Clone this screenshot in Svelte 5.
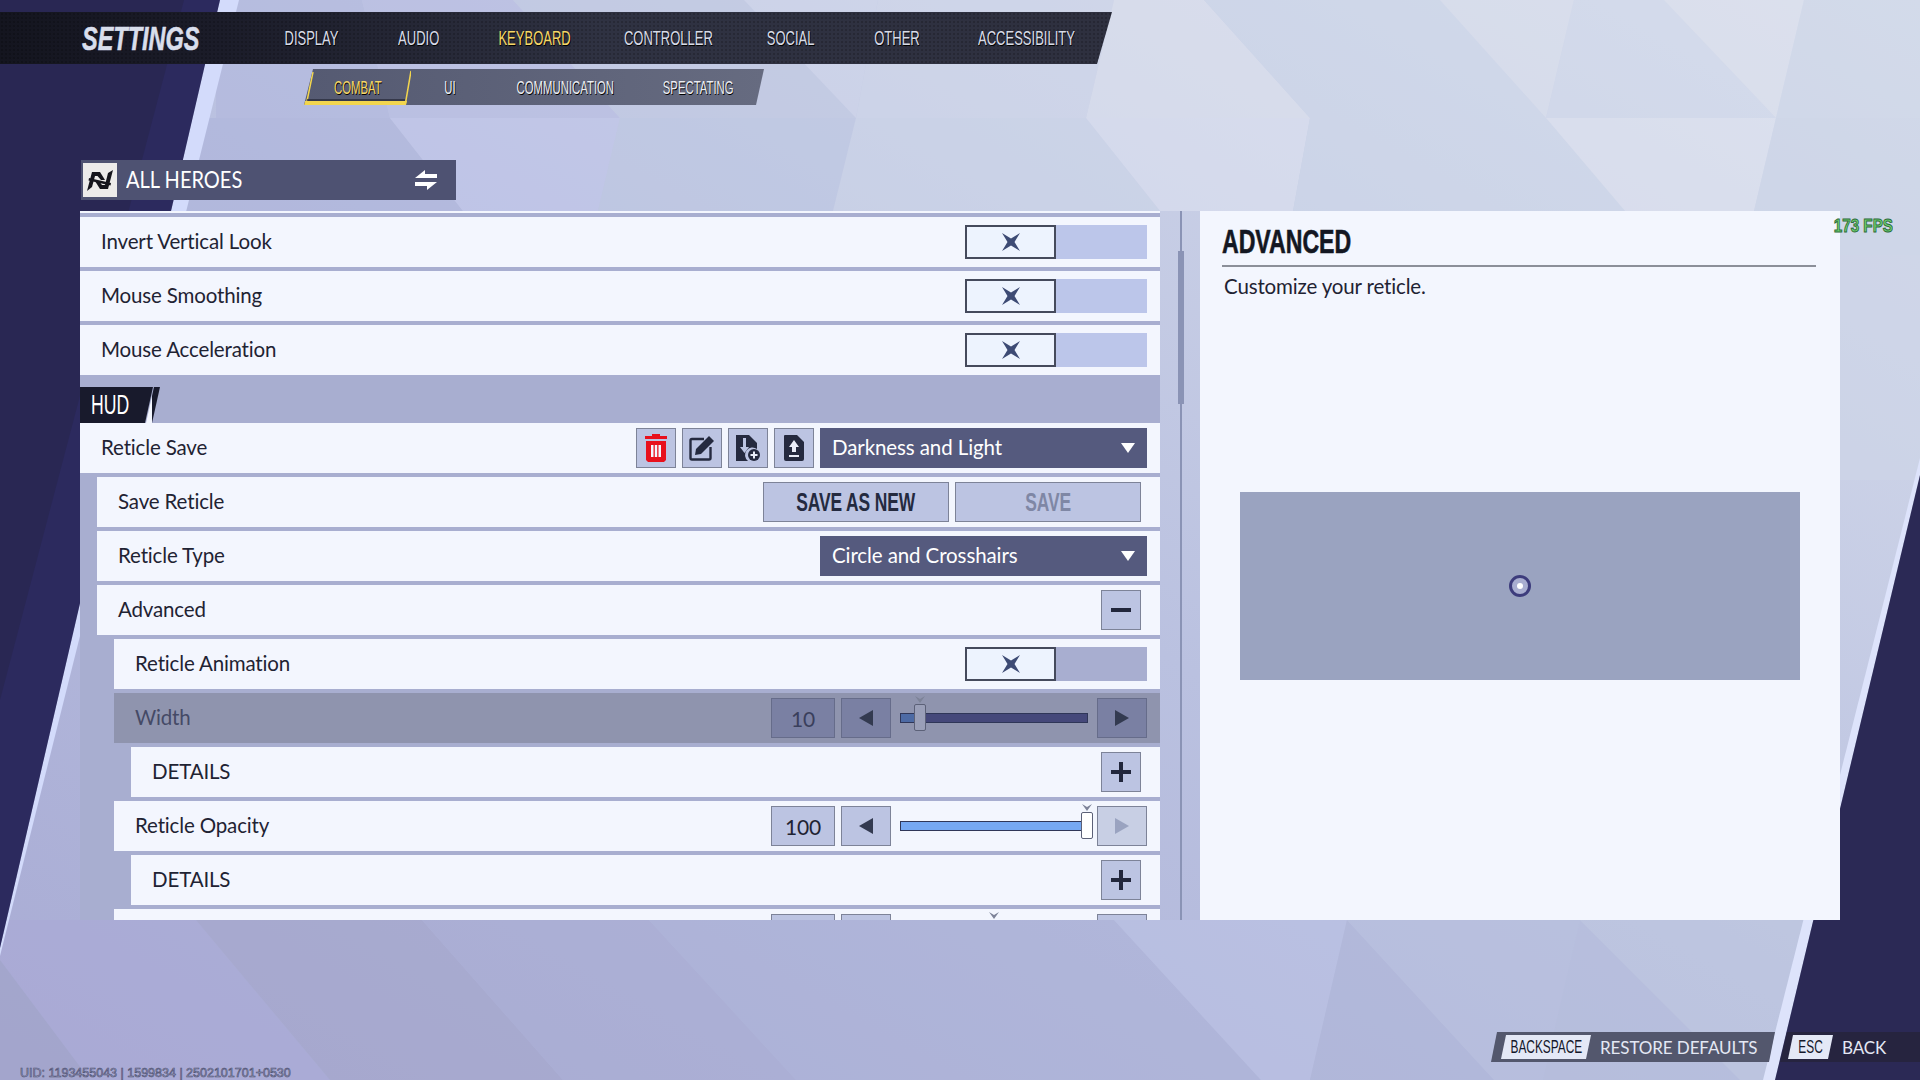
<script>
  const tabs = [
    ["DISPLAY", 116],
    ["AUDIO", 100],
    ["KEYBOARD", 132],
    ["CONTROLLER", 135],
    ["SOCIAL", 110],
    ["OTHER", 101],
    ["ACCESSIBILITY", 159]
  ];
  const subTabs = [
    ["COMBAT", 107],
    ["UI", 78],
    ["COMMUNICATION", 153],
    ["SPECTATING", 113]
  ];
  const toggles = ["Invert Vertical Look", "Mouse Smoothing", "Mouse Acceleration"];

  // background facets, in page pixels
  const facets = [
    ["216,0 362,0 390,118 216,118", "#b1b7de"],
    ["362,0 513,0 620,118 390,118", "#b9bde3"],
    ["513,0 744,0 856,118 620,118", "#c3cbe3"],
    ["744,0 878,0 856,118", "#d3d9ed"],
    ["878,0 1114,0 1086,118 856,118", "#d3daec"],
    ["1114,0 1204,0 1310,118 1086,118", "#e1e5f0"],
    ["1204,0 1440,0 1546,118 1310,118", "#cfd9ea"],
    ["1440,0 1574,0 1546,118", "#dde2ee"],
    ["1574,0 1664,0 1776,118 1546,118", "#d3dbec"],
    ["1664,0 1804,0 1776,118", "#e0e4ef"],
    ["1804,0 1920,0 1920,118 1776,118", "#cfd8e9"],
    ["180,118 390,118 463,211 170,211", "#adb3db"],
    ["390,118 620,118 598,211 463,211", "#c3c7ec"],
    ["620,118 856,118 833,211 598,211", "#bfc9e3"],
    ["856,118 1086,118 1160,211 833,211", "#cfd8ea"],
    ["1086,118 1310,118 1293,211 1160,211", "#e0e4f2"],
    ["1310,118 1546,118 1625,211 1293,211", "#cfd9ea"],
    ["1546,118 1776,118 1754,211 1625,211", "#e2e6f2"],
    ["1776,118 1920,118 1920,480 1840,480 1840,211 1754,211", "#cdd6e8"],
    ["0,920 196,920 330,1080 0,1080", "#aaa9d6"],
    ["0,960 90,1080 0,1080", "#9fa1c6"],
    ["196,920 422,920 563,1080 330,1080", "#a3a4c9"],
    ["422,920 649,920 796,1080 563,1080", "#a8abd2"],
    ["649,920 1114,920 1261,1080 796,1080", "#acb2d8"],
    ["1114,920 1347,920 1310,1080 1261,1080", "#bcc3e6"],
    ["1347,920 1494,1080 1310,1080", "#aeb5d8"],
    ["1347,920 1580,920 1543,1080 1494,1080", "#b8c0de"],
    ["1580,920 1740,1080 1543,1080", "#b6bedc"],
    ["1580,920 1812,920 1775,1080 1740,1080", "#c0c9e0"]
  ];
</script>

{#snippet toggle()}
  <div class="toggle">
    <div class="knob">
      <svg width="20" height="20" viewBox="-10 -10 20 20"><path d="M-9 -9L0 -3.500L9 -9L3.500 0L9 9L0 3.500L-9 9L-3.500 0Z" fill="#3d4a74" /></svg>
    </div>
  </div>
{/snippet}

{#snippet select(text)}
  <div class="select">
    <span>{text}</span>
    <svg width="14" height="10" viewBox="0 0 14 10"><path d="M0 0H14L7 10Z" fill="#fff" /></svg>
  </div>
{/snippet}

{#snippet plus()}
  <div class="sq">
    <svg width="20" height="20" viewBox="0 0 20 20"><path d="M8 0H12V8H20V12H12V20H8V12H0V8H8Z" fill="#22273c" /></svg>
  </div>
{/snippet}

{#snippet stepper(value, pct, full)}
  <div class="stepper">
    <div class="value">{value}</div>
    <div class="arrow"><svg width="14" height="16" viewBox="0 0 14 16"><path d="M14 0V16L0 8Z" /></svg></div>
    <div class="slider">
      <div class="track">
        <div class="fill" style="width: {pct}%"></div>
      </div>
      <div class="thumb" style="left: {pct}%"></div>
      <svg class="caret" style="left: {pct}%" width="10" height="7" viewBox="0 0 10 7"><path d="M0 0L5 3L10 0L5 7Z" /></svg>
    </div>
    <div class="arrow" class:off={full}><svg width="14" height="16" viewBox="0 0 14 16"><path d="M0 0V16L14 8Z" /></svg></div>
  </div>
{/snippet}

<div class="page">
  <svg class="backdrop" width="1920" height="1080" viewBox="0 0 1920 1080">
    <defs>
      <linearGradient id="base" x1="0" y1="1" x2="1" y2="0">
        <stop offset="0" stop-color="#a8abd4" />
        <stop offset="0.5" stop-color="#bac1e0" />
        <stop offset="1" stop-color="#d8deec" />
      </linearGradient>
    </defs>
    <rect width="1920" height="1080" fill="url(#base)" />
    <g opacity="0.55">
      {#each facets as [points, fill]}
        <polygon {points} {fill} />
      {/each}
    </g>
    <polygon points="220,0 239,0 0,956 0,948" fill="#d3dbfb" />
    <polygon points="0,0 220,0 0,948" fill="#2c2a5e" />
    <polygon points="0,0 184,0 0,700" fill="#292753" />
    <polygon points="1920,458 1920,475 1775,1080 1763,1080" fill="#dde3fb" />
    <polygon points="1920,475 1920,1080 1775,1080" fill="#2b2955" />
  </svg>

  <nav class="topbar">
    <div class="brand"><span>SETTINGS</span></div>
    {#each tabs as [tab, w]}
      <div class="tab" class:on={tab === "KEYBOARD"} style="width: {w}px"><span>{tab}</span></div>
    {/each}
  </nav>

  <div class="subbar">
    {#each subTabs as [tab, w], i}
      <div class="sub" class:on={i === 0} style="width: {w}px">
        <span>{tab}</span>
        {#if i === 0}
          <svg class="mark" width="107" height="36" viewBox="0 0 107 36">
            <path d="M0 36H102L103 32H1Z" fill="#f2d54e" />
            <path d="M9 3L3 32M107 2L101.500 34" stroke="#f2d54e" stroke-width="1.500" fill="none" />
            <path d="M3 31H101" stroke="#2a2c3c" stroke-width="1.500" />
          </svg>
        {/if}
      </div>
    {/each}
  </div>

  <div class="hero">
    <div class="logo">
      <svg width="30" height="26" viewBox="0 0 30 26">
        <path d="M2 24L7 5H15L20 13L16 13L12.500 9H10L7 20Z" fill="#15151c" />
        <path d="M28 3L23 22H15L10 14H14L17 18H20L23 6Z" fill="#15151c" />
        <path d="M4 11L26 16L25.500 18.500L3.500 13.500Z" fill="#15151c" />
      </svg>
    </div>
    <span class="hero-name">ALL HEROES</span>
    <svg class="swap" width="24" height="20" viewBox="0 0 24 20">
      <path d="M11 0V4H23V8H1Z M13 20V16H1V12H23Z" fill="#fff" />
    </svg>
  </div>

  <main class="content">
    <section class="list">
      {#each toggles as label}
        <div class="row"><span class="name">{label}</span>{@render toggle()}</div>
      {/each}

      <div class="section">
        <div class="tag"><span>HUD</span></div>
        <div class="slash"></div>
      </div>

      <div class="row">
        <span class="name">Reticle Save</span>
        <div class="tools">
          <div class="tool">
            <svg width="24" height="28" viewBox="0 0 24 28">
              <path d="M8 0H16V2H23V5H1V2H8Z M2 7H22V26L20 28H4L2 26Z" fill="#e8101c" />
              <path d="M7 11H9.500V23H7Z M10.800 11H13.200V23H10.800Z M14.500 11H17V23H14.500Z" fill="#f3f6fe" />
            </svg>
          </div>
          <div class="tool">
            <svg width="26" height="26" viewBox="0 0 26 26">
              <path d="M15 4H3Q1.500 4 1.500 5.500V23Q1.500 24.500 3 24.500H20Q21.500 24.500 21.500 23V12" fill="none" stroke="#252a3f" stroke-width="2.400" />
              <path d="M20 1L25 6L12 19L6 20L7 14Z" fill="#252a3f" />
            </svg>
          </div>
          <div class="tool">
            <svg width="26" height="28" viewBox="0 0 26 28">
              <path d="M1 1H14L22 9V15A7 7 0 0 0 13 27H1Z" fill="#252a3f" />
              <path d="M8 4H11V13H14L9.500 19L5 13H8Z" fill="#bcc4e2" />
              <circle cx="19" cy="21" r="6" fill="#252a3f" />
              <path d="M18 17.500H20V20H22.500V22H20V24.500H18V22H15.500V20H18Z" fill="#e9edf8" />
            </svg>
          </div>
          <div class="tool">
            <svg width="22" height="28" viewBox="0 0 22 28">
              <path d="M2 1H14L21 8V25Q21 27 19 27H3Q1 27 1 25V2Q1 1 2 1Z" fill="#252a3f" />
              <path d="M11 6L16 13H13V18H9V13H6Z M6 21H16V23H6Z" fill="#e9edf8" />
            </svg>
          </div>
        </div>
        {@render select("Darkness and Light")}
      </div>

      <div class="row l1">
        <span class="name">Save Reticle</span>
        <div class="buttons">
          <div class="btn"><span>SAVE AS NEW</span></div>
          <div class="btn off"><span>SAVE</span></div>
        </div>
      </div>

      <div class="row l1"><span class="name">Reticle Type</span>{@render select("Circle and Crosshairs")}</div>

      <div class="row l1">
        <span class="name">Advanced</span>
        <div class="sq">
          <svg width="20" height="4" viewBox="0 0 20 4"><path d="M0 0H20V4H0Z" fill="#22273c" /></svg>
        </div>
      </div>

      <div class="row l2"><span class="name">Reticle Animation</span>{@render toggle()}</div>
      <div class="row l2 hot"><span class="name">Width</span>{@render stepper(10, 10.600, false)}</div>
      <div class="row l3"><span class="name">DETAILS</span>{@render plus()}</div>
      <div class="row l2"><span class="name">Reticle Opacity</span>{@render stepper(100, 99.700, true)}</div>
      <div class="row l3"><span class="name">DETAILS</span>{@render plus()}</div>
      <div class="row l2"><span class="name"></span>{@render stepper("", 50, false)}</div>
    </section>

    <div class="scroll"><div class="scroll-thumb"></div></div>

    <aside class="panel">
      <h2><span>ADVANCED</span></h2>
      <p>Customize your reticle.</p>
      <div class="preview">
        <svg width="30" height="30" viewBox="0 0 30 30">
          <circle cx="15" cy="15" r="9.500" fill="#a9aed0" stroke="#3d3c7c" stroke-width="3" />
          <circle cx="15" cy="15" r="3" fill="#fff" />
        </svg>
      </div>
      <div class="fps">173 FPS</div>
    </aside>
  </main>

  <footer class="foot">
    <div class="uid">UID: 1193455043 | 1599834 | 2502101701+0530</div>
    <div class="hints">
      <div class="hint restore"><div class="key wide"><span>BACKSPACE</span></div><span class="hint-text">RESTORE DEFAULTS</span></div>
      <div class="hint back"><div class="key"><span>ESC</span></div><span class="hint-text">BACK</span></div>
    </div>
  </footer>
</div>

<style>
  :global(body) {
    margin: 0;
  }

  .page {
    position: relative;
    width: 1920px;
    height: 1080px;
    overflow: hidden;
    padding-top: 12px;
    box-sizing: border-box;
    font-family: Lato, "Noto Sans", sans-serif;
    color: #1f2333;
  }

  .backdrop {
    position: absolute;
    inset: 0;
  }

  .topbar,
  .subbar,
  .hero,
  .content,
  .foot {
    position: relative;
  }

  /* the game's display face is very condensed, squeeze Liberation Sans to fit */
  .brand span,
  .tab span,
  .sub span,
  .tag span,
  .btn span,
  .panel h2 span,
  .key span {
    display: inline-block;
    flex: none;
    white-space: nowrap;
    font-family: "Liberation Sans", sans-serif;
  }

  /* header */
  .topbar {
    display: flex;
    align-items: center;
    width: 1112px;
    height: 52px;
    box-sizing: border-box;
    padding-left: 82px;
    background:
      radial-gradient(#0000002e 1px, transparent 1.500px) 0 0 / 4px 4px,
      linear-gradient(90deg, #14151f 0, #1b1c29 220px, #2f3242 600px, #2e303f 100%);
    clip-path: polygon(0 0, 100% 0, 1097px 100%, 0 100%);
  }

  .brand {
    width: 171px;
    flex: none;
  }

  .brand span {
    font-size: 34px;
    font-weight: 700;
    font-style: italic;
    color: #d9deec;
    -webkit-text-stroke: 0.6px #d9deec;
    transform: scaleX(0.69);
    transform-origin: left;
  }

  .tab,
  .sub {
    position: relative;
    display: flex;
    align-items: center;
    justify-content: center;
    flex: none;
    height: 100%;
  }

  .tab span {
    font-size: 20px;
    color: #d8dce8;
    text-shadow: 1px 1px 0 #000;
    transform: scaleX(0.65);
  }

  .tab.on span,
  .sub.on span {
    color: #f6d868;
  }

  .subbar {
    display: flex;
    width: 460px;
    height: 36px;
    margin: 5px 0 0 304px;
    background: linear-gradient(90deg, #555a72, #666b80);
    clip-path: polygon(9px 0, 100% 0, 452px 100%, 0 100%);
  }

  .sub span {
    padding-top: 2px;
    font-size: 18px;
    color: #eceef4;
    text-shadow: 1px 1px 0 #000;
    transform: scaleX(0.63);
  }

  .mark {
    position: absolute;
    inset: 0;
  }

  .hero {
    display: flex;
    align-items: center;
    width: 375px;
    height: 40px;
    margin: 55px 0 0 81px;
    background: #4e5272;
    color: #fff;
  }

  .logo {
    display: flex;
    align-items: center;
    justify-content: center;
    width: 34px;
    height: 34px;
    margin-left: 2px;
    background: #ecebea;
  }

  .hero-name {
    display: inline-block;
    margin: 0 -14px 2px 9px;
    font-size: 23px;
    transform: scaleX(0.87);
    transform-origin: left;
  }

  .swap {
    margin-left: auto;
    margin-right: 18px;
  }

  /* main columns */
  .content {
    display: flex;
    height: 709px;
    margin: 11px 0 0 80px;
  }

  .list {
    width: 1080px;
    box-sizing: border-box;
    overflow: hidden;
    padding-top: 4px;
    border-top: 2px solid #f3f6fe;
    background: #a8aed0;
  }

  .row {
    display: flex;
    align-items: center;
    justify-content: space-between;
    flex: none;
    height: 50px;
    margin-bottom: 4px;
    padding: 0 13px 0 21px;
    background: #f3f6fe;
    font-size: 20.500px;
    letter-spacing: -0.15px;
  }

  .name {
    padding-bottom: 2px;
  }

  .l1 {
    margin-left: 17px;
  }

  .l2 {
    margin-left: 34px;
  }

  .l3 {
    margin-left: 51px;
  }

  .hot {
    background: #8f94ae;
    color: #454a66;
  }

  .section {
    display: flex;
    align-items: flex-end;
    height: 48px;
    margin-top: -4px;
  }

  .tag {
    width: 73px;
    height: 36px;
    box-sizing: border-box;
    padding-left: 11px;
    background: #181a2c;
    clip-path: polygon(0 0, 100% 0, 65px 100%, 0 100%);
    line-height: 36px;
  }

  .tag span {
    font-size: 28px;
    color: #fff;
    transform: scaleX(0.63);
    transform-origin: left;
  }

  .slash {
    width: 14px;
    height: 36px;
    margin-left: -7px;
    background: linear-gradient(90deg, #f3f6fe 0 45%, #181a2c 45%);
    clip-path: polygon(8px 0, 100% 0, 6px 100%, 0 100%);
  }

  /* controls */
  .toggle {
    display: flex;
    width: 182px;
    height: 34px;
    background: #bcc6ea;
  }

  .l2 .toggle {
    background: #a8aed0;
  }

  .knob {
    display: flex;
    align-items: center;
    justify-content: center;
    width: 91px;
    height: 34px;
    box-sizing: border-box;
    border: 2px solid #454a5c;
    background: #edf3fe;
  }

  .select {
    display: flex;
    align-items: center;
    justify-content: space-between;
    width: 327px;
    height: 40px;
    box-sizing: border-box;
    padding: 0 12px;
    background: #555a7e;
    color: #fff;
    font-size: 20.500px;
    letter-spacing: -0.1px;
  }

  .select span {
    padding-bottom: 2px;
  }

  .tools {
    display: flex;
    gap: 6px;
    margin-left: auto;
    margin-right: 6px;
  }

  .tool,
  .sq,
  .value,
  .arrow {
    display: flex;
    align-items: center;
    justify-content: center;
    box-sizing: border-box;
    height: 40px;
    border: 1px solid #7d8398;
    background: #bcc4e2;
  }

  .tool {
    width: 40px;
  }

  .sq {
    width: 40px;
    margin-right: 6px;
  }

  .buttons {
    display: flex;
    gap: 6px;
    margin-right: 6px;
  }

  .btn {
    display: flex;
    align-items: center;
    justify-content: center;
    width: 186px;
    height: 40px;
    box-sizing: border-box;
    border: 1px solid #7d8398;
    background: #bcc4e2;
    color: #242a3f;
  }

  .btn span {
    font-size: 26px;
    font-weight: 700;
    transform: scaleX(0.67);
  }

  .btn.off {
    color: #7f87a5;
  }

  .stepper {
    display: flex;
    align-items: center;
  }

  .value {
    width: 64px;
    margin-right: 6px;
    font-size: 21px;
    color: #1f2333;
  }

  .arrow {
    width: 50px;
    fill: #333a50;
  }

  .arrow.off {
    background: #c8cfe4;
    fill: #9aa3c0;
  }

  .hot .value,
  .hot .arrow {
    border-color: #666c8a;
    background: #7a80a3;
  }

  .hot .value {
    color: #3a3f5c;
  }

  .slider {
    position: relative;
    width: 188px;
    margin: 0 9px;
  }

  .track {
    height: 10px;
    box-sizing: border-box;
    border: 1px solid #2f3658;
    background: #45487a;
  }

  .fill {
    height: 100%;
    background: #76a8f2;
  }

  .hot .fill {
    background: #4d6aa4;
  }

  .thumb {
    position: absolute;
    top: -9px;
    width: 12px;
    height: 27px;
    box-sizing: border-box;
    margin-left: -6px;
    border: 1px solid #5c6178;
    border-radius: 2px;
    background: #fff;
  }

  .hot .thumb {
    background: #9a9fb8;
  }

  .caret {
    position: absolute;
    top: -17px;
    margin-left: -5px;
    fill: #7d8398;
  }

  /* scrollbar */
  .scroll {
    position: relative;
    width: 2px;
    margin-left: 20px;
    background: #8a93b5;
  }

  .scroll-thumb {
    position: absolute;
    top: 40px;
    left: -2px;
    width: 6px;
    height: 153px;
    background: #8a93b5;
  }

  /* right panel */
  .panel {
    position: relative;
    width: 640px;
    margin-left: 18px;
    box-sizing: border-box;
    padding: 13px 24px 0 22px;
    background: #f3f6fe;
  }

  .panel h2 {
    margin: 0;
    padding: 0 0 3px 0;
    border-bottom: 2px solid #8b8f99;
    line-height: 36px;
  }

  .panel h2 span {
    font-size: 33px;
    font-weight: 700;
    color: #131722;
    -webkit-text-stroke: 0.6px #131722;
    transform: scaleX(0.7);
    transform-origin: left;
  }

  .panel p {
    margin: 4px 0 0 2px;
    font-size: 20.500px;
    line-height: 30px;
    letter-spacing: -0.15px;
  }

  .preview {
    display: flex;
    align-items: center;
    justify-content: center;
    width: 560px;
    height: 188px;
    margin: 191px 0 0 18px;
    background: #9aa3c0;
  }

  .fps {
    position: absolute;
    top: 4px;
    right: -53px;
    font-family: "Liberation Sans", sans-serif;
    font-size: 19px;
    font-weight: 700;
    color: #6fd36f;
    -webkit-text-stroke: 1px #2c6b3a;
    transform: scaleX(0.8);
    transform-origin: right;
  }

  /* footer */
  .foot {
    display: flex;
    align-items: flex-start;
    justify-content: space-between;
    height: 48px;
    margin-top: 112px;
  }

  .uid {
    align-self: flex-end;
    margin-left: 20px;
    font-family: "Liberation Sans", sans-serif;
    font-size: 12.500px;
    color: #a5a8d0;
    -webkit-text-stroke: 0.6px #4b4e6d;
  }

  .hints {
    display: flex;
    gap: 5px;
  }

  .hint {
    display: flex;
    align-items: center;
    height: 30px;
    color: #e4e8f4;
  }

  .restore {
    width: 284px;
    padding-left: 10px;
    box-sizing: border-box;
    background: #53576d;
    clip-path: polygon(6px 0, 100% 0, 278px 100%, 0 100%);
  }

  .back {
    width: 140px;
    padding-left: 8px;
    box-sizing: border-box;
    background: #26243f;
    clip-path: polygon(7px 0, 100% 0, 100% 100%, 0 100%);
  }

  .key {
    display: flex;
    align-items: center;
    justify-content: center;
    width: 45px;
    height: 24px;
    background: #e4e8f6;
    clip-path: polygon(5px 0, 100% 0, calc(100% - 5px) 100%, 0 100%);
    color: #14172a;
  }

  .key span {
    font-size: 18px;
    transform: scaleX(0.66);
  }

  .key.wide {
    width: 90px;
  }

  .hint-text {
    margin-left: 9px;
    font-size: 17px;
    letter-spacing: -0.1px;
  }
</style>
